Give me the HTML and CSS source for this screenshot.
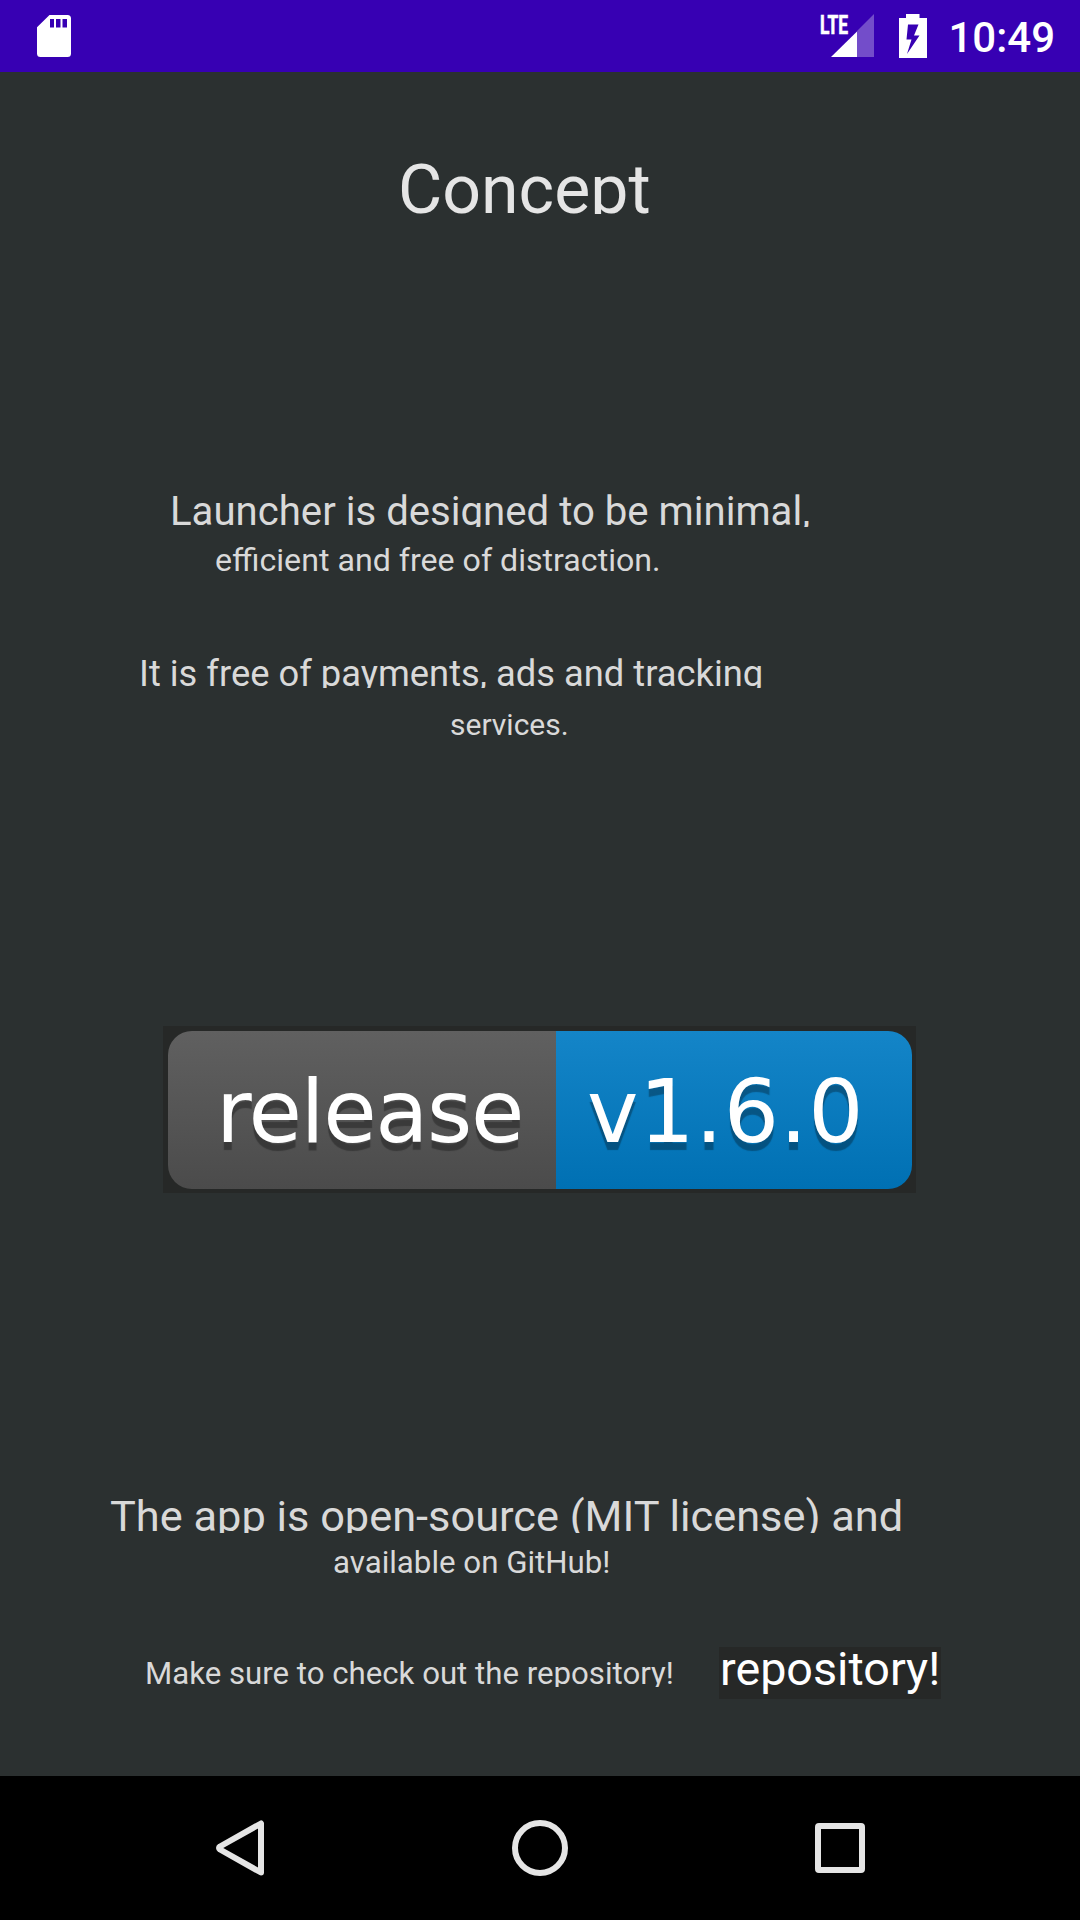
FILE: index.html
```html
<!DOCTYPE html>
<html lang="en">
<head>
<meta charset="utf-8">
<title>Concept</title>
<link rel="stylesheet" href="styles.css">
</head>
<body>
<header class="status">
  <svg class="sd" width="34" height="42" viewBox="0 0 34 42"><path fill="#fff" fill-rule="evenodd" d="M12.500 0H30.500Q34 0 34 3.500V38.500Q34 42 30.500 42H3.500Q0 42 0 38.500V12.300ZM13 4V12.500H17V4ZM19 4V12.500H23.500V4ZM25.500 4V12.500H30V4Z"/></svg>
  <div class="tray">
    <svg class="signal" width="54" height="44" viewBox="0 0 54 44">
      <path fill="#fff" fill-opacity=".3" d="M37 17L54 0V43H37Z"/>
      <path fill="#fff" d="M11 43L37 17.500V43Z"/>
      <text class="lte" x="0" y="19.500" textLength="28" lengthAdjust="spacingAndGlyphs">LTE</text>
    </svg>
    <svg class="battery" width="28" height="44" viewBox="0 0 28 44"><path fill="#fff" fill-rule="evenodd" d="M7 0H20.500V4H28V44H0V4H7ZM9 10.500L7.500 25.500H12.500L8 40L20.500 21.500H15L19.500 10.500Z"/></svg>
    <time class="clock">10:49</time>
  </div>
</header>
<main class="page">
  <h1 class="line title">Concept</h1>
  <p class="line design">Launcher is designed to be minimal,</p>
  <p class="line efficient">efficient and free of distraction.</p>
  <p class="line free">It is free of payments, ads and tracking</p>
  <p class="line services">services.</p>
  <div class="badge-frame">
    <div class="badge"><span class="badge-name">release</span><span class="badge-value">v1.6.0</span></div>
  </div>
  <p class="line source">The app is open-source (MIT license) and</p>
  <p class="line available">available on GitHub!</p>
  <div class="repo">
    <p class="line sure">Make sure to check out the repository!</p>
    <a class="repo-link">repository!</a>
  </div>
</main>
<nav class="nav">
  <svg width="48" height="56" viewBox="0 0 48 56"><path d="M45 3.500V52.500L4 29.500Q2 28 4 26.500Z"/></svg>
  <svg width="56" height="56" viewBox="0 0 56 56"><circle cx="28" cy="28" r="25"/></svg>
  <svg width="50" height="50" viewBox="0 0 50 50"><rect x="3" y="3" width="44" height="44" rx="1"/></svg>
</nav>
</body>
</html>
```

FILE: styles.css
```css
body {
  margin: 0;
  width: 1080px;
  height: 1920px;
  display: flex;
  flex-direction: column;
  background: #2b3030;
  font-family: Roboto, sans-serif;
  color: #d9d9d9;
  overflow: hidden;
}

.status {
  height: 72px;
  box-sizing: border-box;
  padding: 0 25px 0 37px;
  display: flex;
  justify-content: space-between;
  align-items: center;
  background: #3700b3;
}

.tray {
  display: flex;
  align-items: center;
}

.signal {
  overflow: visible;
}

.lte {
  font: 700 26px Roboto, sans-serif;
  fill: #fff;
  stroke: #fff;
  stroke-width: .7px;
}

.battery {
  margin-left: 25px;
}

.clock {
  margin-left: 21px;
  font-size: 42px;
  font-weight: 500;
  line-height: 72px;
  padding-top: 4px;
  height: 68px;
  line-height: 68px;
  color: #fff;
}

.page {
  height: 1704px;
  display: flex;
  flex-direction: column;
  align-items: flex-start;
}

.line {
  margin: 0;
  font-weight: 400;
  line-height: 40px;
  height: 40px;
  white-space: nowrap;
  overflow: hidden;
}

.title {
  margin: 88px 0 0 398px;
  height: 54px;
  line-height: 60px;
  font-size: 68px;
  color: #e5e5e5;
}

.design {
  margin: 277px 0 0 170px;
  height: 36px;
  line-height: 42px;
  font-size: 40.15px;
}

.efficient {
  margin: 13px 0 0 215px;
  font-size: 32.15px;
}

.free {
  margin: 74px 0 0 139px;
  height: 34px;
  font-size: 36.35px;
}

.services {
  margin: 17px 0 0 450px;
  font-size: 30px;
}

.badge-frame {
  margin: 281px 0 0 163px;
  width: 753px;
  height: 167px;
  box-sizing: border-box;
  padding: 5px 4px 4px 5px;
  background: #262827;
}

.badge {
  display: flex;
  height: 158px;
  border-radius: 24px;
  overflow: hidden;
  font: 86.9px/162px "DejaVu Sans", sans-serif;
  color: #fff;
  text-shadow: 0 8px 1px rgba(1, 1, 1, .3);
}

.badge-name {
  width: 388px;
  box-sizing: border-box;
  padding-left: 48px;
  letter-spacing: -1.4px;
  background: linear-gradient(#606060, #4b4b4b);
}

.badge-value {
  flex: 1;
  padding-left: 31px;
  letter-spacing: .8px;
  background: linear-gradient(#1485c8, #0070b3);
}

.source {
  margin: 302px 0 0 110px;
  height: 38px;
  line-height: 43px;
  font-size: 43.35px;
}

.available {
  margin: 10px 0 0 333px;
  font-size: 31.25px;
}

.repo {
  margin: 64px 0 0 145px;
  display: flex;
  align-items: flex-start;
}

.sure {
  width: 574px;
  margin-top: 6px;
  height: 34px;
  line-height: 42px;
  font-size: 31.2px;
}

.repo-link {
  width: 222px;
  height: 52px;
  box-sizing: border-box;
  padding-left: 1px;
  font-size: 46.7px;
  line-height: 44px;
  white-space: nowrap;
  color: #fff;
  background: #262827;
}

.nav {
  height: 144px;
  box-sizing: border-box;
  padding: 0 215px 0 216px;
  display: flex;
  align-items: center;
  justify-content: space-between;
  background: #000;
}

.nav svg {
  fill: none;
  stroke: #e5e5e5;
  stroke-width: 6;
  stroke-linejoin: round;
}
```
